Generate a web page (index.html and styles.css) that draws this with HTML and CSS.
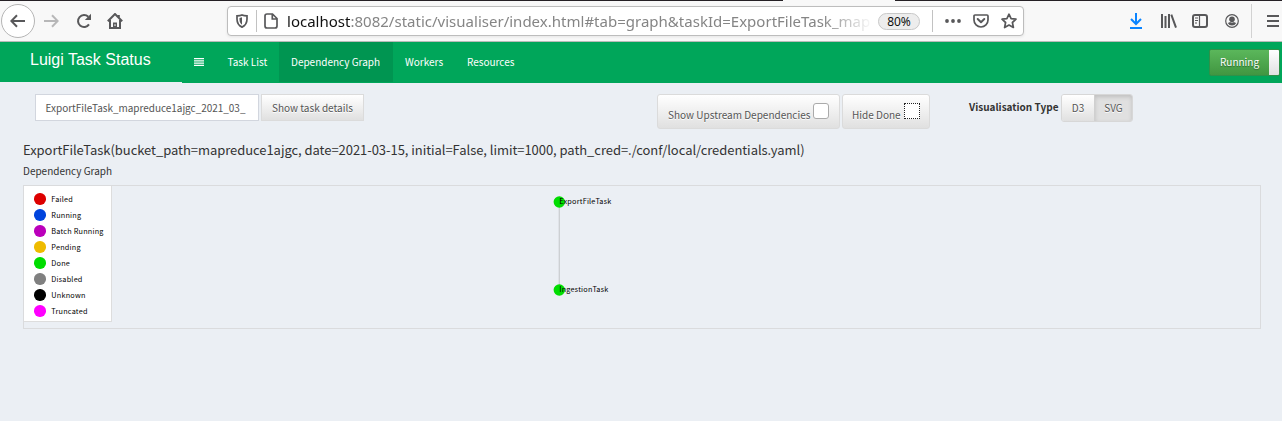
FILE: index.html
```html
<!DOCTYPE html>
<html lang="en">
<head>
<meta charset="utf-8">
<title>Luigi Task Visualiser</title>
<link rel="stylesheet" href="styles.css">
</head>
<body>
<div class="chrome">
  <div class="tabstrip"><i class="tabs tabs-left"></i><i class="tabs tabs-right"></i></div>
  <div class="toolbar">
    <div class="back"><svg width="16" height="14" viewBox="0 0 16 14"><path d="M15 7H1.5M7 1.2L1.3 7L7 12.8" class="stroke thick"/></svg></div>
    <svg class="forward" width="16" height="14" viewBox="0 0 16 14"><path d="M1 7H14.5M9 1.2L14.7 7L9 12.8" class="stroke thick"/></svg>
    <svg class="reload" width="16" height="16" viewBox="0 0 16 16"><path d="M13 11.4A6 6 0 1 1 12.3 3.8" class="stroke thick"/><path d="M15 .8V7H8.8Z" class="fill"/></svg>
    <svg class="home" width="16" height="16" viewBox="0 0 16 16"><path d="M.8 8.2L8 1L15.2 8.2M3 7V15H13V7M11.8 2V4.5" class="stroke thick"/><path d="M6 14.5V9.5H10V14.5Z" class="fill"/><path d="M8 11.2V13" stroke="#fff"/></svg>
    <div class="urlbar">
      <svg class="shield" width="12" height="14" viewBox="0 0 12 14"><path d="M6 .9C4.5 1.6 2.8 1.8 1 1.8V5C1 9 2.6 11.6 6 13.1C9.4 11.6 11 9 11 5V1.8C9.2 1.8 7.5 1.6 6 .9Z" class="stroke"/><path d="M6 3.3L3.5 3.9V5.5C3.5 8 4.3 9.6 6 10.7Z" class="fill"/></svg>
      <i class="divider"></i>
      <svg class="page" width="14" height="16" viewBox="0 0 14 16"><path d="M3 1H8.5L13 5.5V13Q13 15 11 15H3Q1 15 1 13V3Q1 1 3 1ZM8.3 1V6H13" class="stroke"/></svg>
      <div class="url"><b>localhost</b>:8082/static/visualiser/index.html#tab=graph&amp;taskId=ExportFileTask_map</div>
      <span class="zoom">80%</span>
      <i class="divider second"></i>
      <svg class="dots" width="16" height="4" viewBox="0 0 16 4"><circle cx="2" cy="2" r="1.9"/><circle cx="8" cy="2" r="1.9"/><circle cx="14" cy="2" r="1.9"/></svg>
      <svg class="pocket" width="16" height="14" viewBox="0 0 16 14"><path d="M2 1H14Q15 1 15 2V6A7 7 0 0 1 1 6V2Q1 1 2 1Z" class="stroke"/><path d="M4.7 5L8 8.2L11.3 5" class="stroke thick round"/></svg>
      <svg class="star" width="16" height="16" viewBox="0 0 16 16"><path d="M8 1.2L10.1 5.6L15 6.2L11.4 9.5L12.4 14.5L8 12L3.6 14.5L4.6 9.5L1 6.2L5.9 5.6Z" class="stroke round"/></svg>
    </div>
    <svg class="download" width="12" height="16" viewBox="0 0 12 16"><path d="M6 0V11M1 6L6 11L11 6M0 15H12"/></svg>
    <svg class="library" width="16" height="14" viewBox="0 0 16 14"><path d="M1 0V14M4.5 2V14M8 0V14M10.3 .6L15 13.6" class="stroke thick"/></svg>
    <svg class="sidebar" width="16" height="14" viewBox="0 0 16 14"><rect x="1" y="1" width="14" height="12" rx="2" class="stroke thick"/><path d="M7.5 1V13" class="stroke thin"/><path d="M3 4H6M3 6.5H6M3 9H5" class="stroke thin"/></svg>
    <svg class="account" width="14" height="14" viewBox="0 0 14 14"><circle cx="7" cy="7" r="6.3" class="stroke thin"/><circle cx="7" cy="5.2" r="2.8" class="fill"/><path d="M2.8 9Q4.5 8.6 5 8Q7 9.2 9 8Q9.5 8.6 11.2 9A4.7 4.7 0 0 1 2.8 9Z" class="fill"/></svg>
    <i class="toolbar-divider"></i>
    <svg class="menu" width="13" height="12" viewBox="0 0 13 12"><path d="M0 1H12M0 6H12M0 11H12" class="stroke thick"/></svg>
  </div>
</div>

<header class="header">
  <div class="brand">Luigi Task Status</div>
  <nav class="nav">
    <a class="burger"><svg width="10" height="8" viewBox="0 0 10 8"><path d="M0 .7H10M0 2.9H10M0 5.1H10M0 7.3H10"/></svg></a>
    <a class="tasks">Task List</a>
    <a class="active">Dependency Graph</a>
    <a class="workers">Workers</a>
    <a class="resources">Resources</a>
  </nav>
  <div class="switch"><span>Running</span><i></i></div>
</header>

<main class="content">
  <div class="controls">
    <div class="field">ExportFileTask_mapreduce1ajgc_2021_03_</div>
    <button class="btn details">Show task details</button>
    <label class="btn check upstream"><span>Show Upstream Dependencies</span><i class="box"></i></label>
    <label class="btn check hide"><span>Hide Done</span><i class="box focused"></i></label>
    <b class="vis-label">Visualisation Type</b>
    <div class="group"><button class="d3">D3</button><button class="svg-on">SVG</button></div>
  </div>
  <h1 class="title">ExportFileTask(bucket_path=mapreduce1ajgc, date=2021-03-15, initial=False, limit=1000, path_cred=./conf/local/credentials.yaml)</h1>
  <h2 class="subtitle">Dependency Graph</h2>
  <section class="graph">
    <ul class="legend">
      <li><i class="dot failed"></i>Failed</li>
      <li><i class="dot running"></i>Running</li>
      <li><i class="dot batch"></i>Batch Running</li>
      <li><i class="dot pending"></i>Pending</li>
      <li><i class="dot done"></i>Done</li>
      <li><i class="dot disabled"></i>Disabled</li>
      <li><i class="dot unknown"></i>Unknown</li>
      <li><i class="dot truncated"></i>Truncated</li>
    </ul>
    <svg class="canvas" width="1148" height="142" viewBox="0 0 1148 142">
      <path d="M447.3 16V104" class="edge"/>
      <circle cx="447.3" cy="16" r="5.7" class="node"/>
      <circle cx="447.3" cy="104" r="5.7" class="node"/>
      <text x="447.3" y="18" textLength="52">ExportFileTask</text>
      <text x="447.3" y="106" textLength="49">IngestionTask</text>
    </svg>
  </section>
</main>
</body>
</html>
```
FILE: styles.css
```css
* { box-sizing: border-box; }
body {
  margin: 0;
  height: 421px;
  overflow: hidden;
  background: #ebeff4;
  color: #333;
  font-family: "Noto Sans CJK SC", "Noto Sans", sans-serif;
  font-size: 10px;
  line-height: 16px;
}
svg { display: block; flex: none; }
i { display: block; flex: none; }

.chrome { height: 42px; background: #f8f8f8; border-bottom: 1px solid #b9bbb9; }
.tabstrip { display: flex; justify-content: space-between; height: 1px; }
.tabs { height: 1px; background: #252025; }
.tabs-left { width: 783px; }
.tabs-right { width: 387px; }
.toolbar { display: flex; align-items: center; height: 40px; }
.stroke { fill: none; stroke: #58585a; stroke-width: 1.7; }
.thick { stroke-width: 2; }
.thin { stroke-width: 1.2; }
.round { stroke-linejoin: round; stroke-linecap: round; }
.fill { fill: #58585a; }
.back {
  display: flex; align-items: center; justify-content: center;
  width: 34px; height: 34px; margin-left: 1px;
  border: 1px solid #b5b5b5; border-radius: 50%; background: #fff;
}
.forward { margin-left: 8px; opacity: .4; }
.reload { margin-left: 17px; }
.home { margin-left: 15px; }
.urlbar {
  display: flex; align-items: center; flex: none;
  width: 797px; height: 30px; margin-left: 104px;
  background: #fff; border: 1px solid #bdbdbd; border-radius: 4px;
  box-shadow: 0 1px 3px rgba(0, 0, 0, .08);
}
.shield { margin-left: 8px; }
.divider { width: 1px; height: 22px; margin-left: 8px; background: #c2c2c2; }
.page { margin-left: 7px; }
.url {
  flex: none; width: 586px; height: 24px; margin-left: 9px;
  font: 15px/24px "Noto Sans", sans-serif;
  letter-spacing: .01px; white-space: nowrap; color: #858585;
  -webkit-mask-image: linear-gradient(90deg, #000 535px, transparent 586px);
  mask-image: linear-gradient(90deg, #000 535px, transparent 586px);
}
.url b { font-weight: 400; color: #111; }
.zoom {
  flex: none; width: 42px; height: 17px; margin-left: 5px;
  border: 1px solid #c8c8c8; border-radius: 9px; background: #ededed;
  font: 12px/15px "Noto Sans", sans-serif; text-align: center; color: #111;
}
.second { margin-left: 12px; }
.dots { margin-left: 12px; fill: #58585a; }
.pocket { margin-left: 12px; }
.star { margin-left: 12px; }
.download { margin-left: 106px; fill: none; stroke: #0a84ff; stroke-width: 2; }
.library { margin-left: 19px; }
.sidebar { margin-left: 15px; }
.account { margin-left: 17px; }
.toolbar-divider { width: 1px; height: 34px; margin-left: 12px; background: #d2d2d2; }
.menu { margin-left: 15px; }

.header { display: flex; height: 41px; background: #00a65a; color: #fff; }
.brand {
  width: 182px; height: 41px; padding-left: 30px;
  border-bottom: 1px solid #ebeff4;
  font: 16px/36px "Liberation Sans", sans-serif;
}
.nav { display: flex; height: 40px; line-height: 40px; white-space: nowrap; }
.burger { padding: 16px 0 0 12px; width: 33px; }
.burger path { stroke: #fff; stroke-width: 1.3; }
.tasks { padding-left: 12.5px; width: 64px; }
.active { width: 114px; padding-left: 12px; background: #009551; }
.workers { width: 63px; padding-left: 12px; }
.resources { padding-left: 11px; }
.switch {
  display: flex; width: 71px; height: 27px; margin: 7px 2px 0 auto;
  border: 1px solid #2f9148; border-radius: 2px;
  background: linear-gradient(#5bb75b, #419641);
  line-height: 24px; overflow: hidden; text-shadow: 0 1px 1px rgba(0, 0, 0, .4);
}
.switch span { width: 59px; padding-left: 10px; }
.switch i { width: 10px; background: linear-gradient(#fff, #e1e1e1); }

.content { padding: 11px 21px 0 23px; }
.controls { display: flex; align-items: flex-start; height: 45px; padding-left: 12px; white-space: nowrap; }
.field {
  width: 224px; height: 27px; padding-left: 9.5px;
  border: 1px solid #d2d6de; background: #fff; color: #555; line-height: 26px;
  letter-spacing: -.03px;
}
.btn, .group button {
  font: inherit; color: #555; text-shadow: 0 1px 0 #fff;
  background: linear-gradient(#fff, #e0e0e0);
}
.btn { border: 1px solid #dbdbdb; border-radius: 3px; padding: 0 10px; }
.details { width: 103px; height: 27px; margin-left: 2px; padding: 0 9px; border-radius: 0; line-height: 25px; }
.check { display: flex; height: 35px; line-height: 40px; }
.upstream { width: 183px; margin-left: 293px; }
.hide { width: 88px; margin-left: 2px; padding: 0 9px; }
.box {
  width: 16px; height: 16px; margin: 8px 0 0 auto;
  border: 1px solid #aaa; border-radius: 3px; background: #fff;
}
.focused { border: 1px dotted #222; border-radius: 0; }
.vis-label { width: 92px; margin-left: 39px; line-height: 26px; font-weight: 700; }
.group { display: flex; height: 28px; border: 1px solid #d7d7d7; border-radius: 3px; overflow: hidden; }
.group button { padding: 0; border: 0; line-height: 26px; }
.group .d3 { width: 32px; }
.group .svg-on { width: 38px; background: #e0e0e0; box-shadow: inset 0 2px 4px rgba(0, 0, 0, .15); border-left: 1px solid #d0d0d0; }

.title {
  height: 22px; margin: 0; font-size: 13px; font-weight: 400; line-height: 22px;
  letter-spacing: -.05px; white-space: nowrap;
}
.subtitle { height: 18px; margin: 0 0 6px; font-size: 10px; font-weight: 400; line-height: 20px; }
.graph { display: flex; align-items: flex-start; width: 1238px; height: 144px; border: 1px solid #dadbdd; }
.legend {
  flex: none; width: 88px; height: 136px; margin: 0; padding: 5px 0 0 10px;
  background: #fff; border-right: 1px solid #ddd; border-bottom: 1px solid #ddd;
  list-style: none; font-size: 7.3px; letter-spacing: .2px; color: #000;
}
.legend li { display: flex; align-items: center; height: 16px; white-space: nowrap; }
.dot { width: 11.5px; height: 11.5px; margin-right: 5.8px; border-radius: 50%; }
.failed { background: #d00; }
.running { background: #04d; }
.batch { background: #b0b; }
.pending { background: #eb0; }
.done { background: #0d0; }
.disabled { background: #808080; }
.unknown { background: #000; }
.truncated { background: #f0f; }
.edge { stroke: #ccced1; stroke-width: 1.3; }
.node { fill: #0d0; }
.canvas text { font-size: 7.3px; fill: #000; }
```
